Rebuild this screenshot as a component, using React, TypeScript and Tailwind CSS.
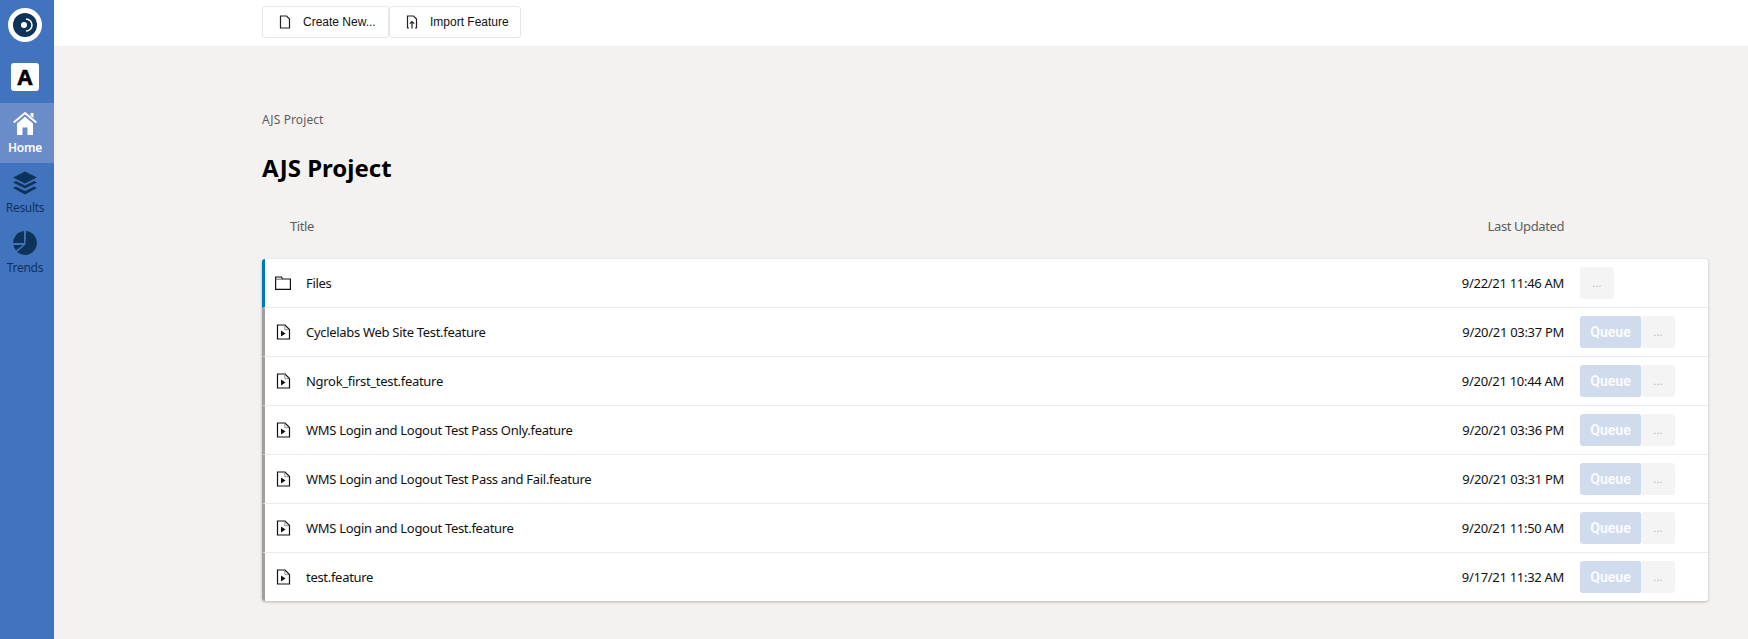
const seg = "font-['Noto_Sans',sans-serif]";

function FileIcon() {
  return (
    <svg width="16" height="16" viewBox="0 0 16 16" fill="none" className="text-[#111]">
      <path d="M2.500 1H10L14.500 5.500V15H2.500Z" stroke="currentColor" strokeWidth="1.200" />
      <path d="M9.800 1.500V5.700H14" stroke="#777" strokeWidth="0.800" />
      <path d="M6 6.500L10.500 9.500L6 12.500Z" fill="currentColor" />
    </svg>
  );
}

function FolderIcon() {
  return (
    <svg width="16" height="14" viewBox="0 0 16 14" fill="none" className="text-[#111]">
      <path d="M0.600 1H6.500L7.500 3H15.400V13.400H0.600Z" stroke="currentColor" strokeWidth="1.200" />
      <path d="M0.600 3.200H7.500" stroke="#666" strokeWidth="1" />
    </svg>
  );
}

function HomeIcon() {
  return (
    <svg width="24" height="24" viewBox="0 0 24 24" fill="currentColor">
      <path d="M0.700 11.500L12 2L23.300 11.500" fill="none" stroke="currentColor" strokeWidth="2" />
      <path d="M17.500 2H20.500V7L17.500 4.500Z" />
      <path d="M4 12.500L12 5.700L20 12.500V24H14.500V16.500H9.500V24H4Z" />
    </svg>
  );
}

function LayersIcon() {
  return (
    <svg width="24" height="24" viewBox="0 0 24 24" fill="currentColor">
      <path d="M12 0.500L24 6.500L12 12.500L0 6.500Z" />
      <path d="M0 11.500L3 10L12 14.500L21 10L24 11.500L12 17.500Z" />
      <path d="M0 17L3 15.500L12 20L21 15.500L24 17L12 23.500Z" />
    </svg>
  );
}

function Row({ name, date, folder }: { name: string; date: string; folder?: boolean }) {
  return (
    <div className={`flex h-[49px] items-center border-l-[3px] border-b border-b-[#edebe9] last:h-[48px] last:border-b-0 ${folder ? "border-l-[#0078b8]" : "border-l-[#a19f9d]"}`}>
      <div className="flex w-[32px] justify-center pl-[4px]">{folder ? <FolderIcon /> : <FileIcon />}</div>
      <div className={`${seg} ml-[9px] flex-1 pt-[2px] text-[13px] tracking-[-0.3px] text-[#111]`}>{name}</div>
      <div className={`${seg} w-[200px] pt-[2px] text-right text-[13px] tracking-[-0.3px] text-[#111]`}>{date}</div>
      <div className="ml-[16px] flex w-[128px]">
        {!folder && (
          <div className="flex h-[32px] w-[61px] items-center justify-center rounded-l-[3px] rounded-r-[2px] bg-[#d0dcee] font-['Roboto',sans-serif] text-[14px] font-bold text-[#fafafa]">
            Queue
          </div>
        )}
        <div className="flex h-[32px] w-[34px] items-center justify-center rounded-[3px] bg-[#f4f4f4] font-['Roboto',sans-serif] text-[12px] text-[#bdbbb9]">
          ...
        </div>
      </div>
    </div>
  );
}

const rows = [
  ["Cyclelabs Web Site Test.feature", "9/20/21 03:37 PM"],
  ["Ngrok_first_test.feature", "9/20/21 10:44 AM"],
  ["WMS Login and Logout Test Pass Only.feature", "9/20/21 03:36 PM"],
  ["WMS Login and Logout Test Pass and Fail.feature", "9/20/21 03:31 PM"],
  ["WMS Login and Logout Test.feature", "9/20/21 11:50 AM"],
  ["test.feature", "9/17/21 11:32 AM"],
];

export default function App() {
  return (
    <div className="flex h-[639px] w-full overflow-hidden bg-[#f3f2f1]">
      <aside className="flex h-full w-[54px] shrink-0 flex-col items-center bg-[#4273bf]">
        <div className="mt-[8px] mr-[4px] flex h-[34px] w-[34px] items-center justify-center rounded-full bg-white">
          <svg width="24" height="24" viewBox="0 0 24 24">
            <circle cx="12" cy="12" r="12" fill="#0e3358" />
            <circle cx="11" cy="12" r="3" fill="#fff" />
            <path d="M13 6A6 6 0 0 1 13 18" stroke="#fff" strokeWidth="1.500" fill="none" />
          </svg>
        </div>
        <div className="mt-[21px] mr-[4px] flex h-[28px] w-[28px] items-center justify-center rounded-[3px] bg-white font-['Liberation_Sans',sans-serif] text-[22px] font-bold text-black [-webkit-text-stroke:0.7px_black]">
          A
        </div>
        <div className="mt-[12px] flex h-[60px] w-full flex-col items-center bg-[#6a8dca] pt-[8px] pr-[4px] text-white">
          <HomeIcon />
          <span className={`${seg} mt-[5px] text-[12px] font-semibold leading-[16px] tracking-[-0.3px]`}>Home</span>
        </div>
        <div className="flex h-[60px] w-full flex-col items-center pt-[8px] pr-[4px] text-[#0e3358]">
          <LayersIcon />
          <span className={`${seg} mt-[5px] text-[12px] leading-[16px] tracking-[-0.3px]`}>Results</span>
        </div>
        <div className="flex h-[60px] w-full flex-col items-center pt-[8px] pr-[4px] text-[#0e3358]">
          <svg width="24" height="24" viewBox="0 0 24 24" fill="currentColor">
            <path d="M13 0A12 12 0 1 1 4 21L12.500 13.500Z" />
            <path d="M11 0.100V12H0.100A12 12 0 0 1 11 0.100Z" />
            <path d="M0.300 14H10L3 19.500A12 12 0 0 1 0.300 14Z" />
          </svg>
          <span className={`${seg} mt-[5px] text-[12px] leading-[16px] tracking-[-0.3px]`}>Trends</span>
        </div>
      </aside>
      <main className="flex min-w-0 flex-1 flex-col">
        <header className="flex h-[46px] items-start bg-white pt-[6px] pl-[208px]">
          <button className="flex h-[32px] w-[127px] items-center rounded-[3px] border border-[#e6e6e6] pl-[16px] font-['Liberation_Sans',sans-serif] text-[12px] text-[#111]">
            <svg width="12" height="14" viewBox="0 0 12 14" fill="none" className="mr-[12px]">
              <path d="M1.500 1H7.500L10.500 4V13H1.500Z" stroke="#222" strokeWidth="1.200" />
            </svg>
            Create New...
          </button>
          <button className="flex h-[32px] w-[132px] items-center rounded-[3px] border border-[#e6e6e6] pl-[16px] font-['Liberation_Sans',sans-serif] text-[12px] text-[#111]">
            <svg width="12" height="14" viewBox="0 0 12 14" fill="none" className="mr-[12px]">
              <path d="M3 13H1.500V1H7.500L10.500 4V13H9" stroke="#222" strokeWidth="1.200" />
              <path d="M6 13.500V6.500M3.800 8.700L6 6.500L8.200 8.700" stroke="#222" strokeWidth="1.200" />
            </svg>
            Import Feature
          </button>
        </header>
        <div className="flex-1 pl-[208px] pr-[40px]">
          <div className={`${seg} mt-[66px] text-[12px] leading-[16px] tracking-[0.1px] text-[#605e5c]`}>AJS Project</div>
          <h1 className={`${seg} mt-[24px] text-[24px] font-bold leading-[32px] text-black`}>AJS Project</h1>
          <div className={`${seg} mt-[31px] flex h-[24px] items-center text-[13px] tracking-[-0.4px] text-[#605e5c]`}>
            <span className="ml-[28px] flex-1">Title</span>
            <span className="mr-[144px]">Last Updated</span>
          </div>
          <div className="mt-[20px] overflow-hidden rounded-[3px] bg-white shadow-[0_1px_3px_rgba(0,0,0,0.25)]">
            <Row name="Files" date="9/22/21 11:46 AM" folder />
            {rows.map(([n, d]) => (
              <Row key={n} name={n} date={d} />
            ))}
          </div>
        </div>
      </main>
    </div>
  );
}
